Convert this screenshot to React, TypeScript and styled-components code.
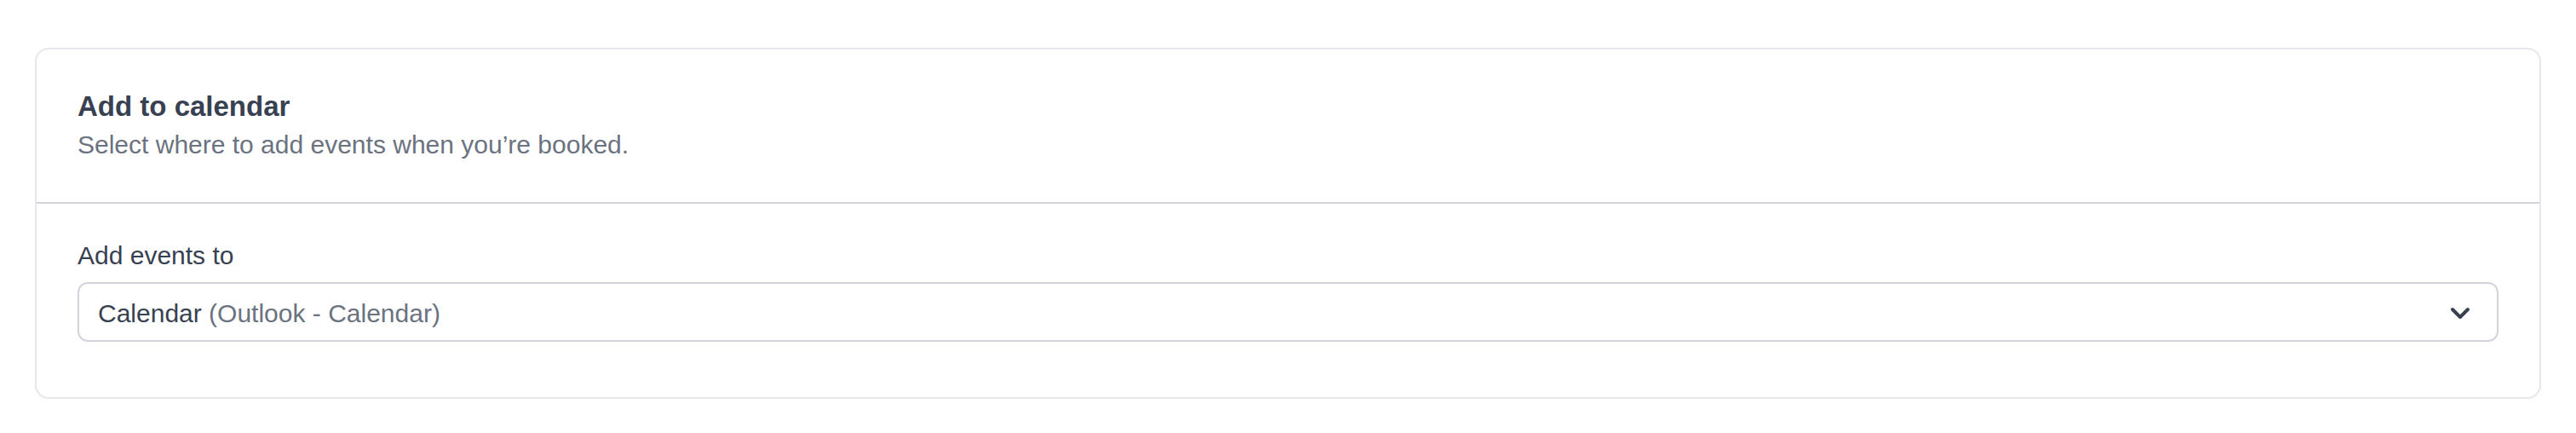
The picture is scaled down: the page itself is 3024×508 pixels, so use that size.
import React, { FC } from "react";
import styled, { createGlobalStyle } from "styled-components";

const GlobalStyle = createGlobalStyle`
  * {
    box-sizing: border-box;
  }
  html, body {
    margin: 0;
    background: #fff;
    font-family: "Liberation Sans", Arial, Helvetica, sans-serif;
  }
`;

const Page = styled.div`
  padding: 56px 41px 38px 41px;
`;

const Card = styled.section`
  border: 2px solid #e5e7eb;
  border-radius: 16px;
  background: #fff;
`;

const Header = styled.div`
  padding: 47px 48px 47px 48px;
  border-bottom: 2px solid #d1d5db;
`;

const Title = styled.h2`
  margin: 0;
  font-size: 33px;
  line-height: 40px;
  font-weight: 700;
  color: #374151;
`;

const Subtitle = styled.p`
  margin: 5px 0 0 0;
  font-size: 30px;
  line-height: 40px;
  color: #6b7280;
`;

const Body = styled.div`
  padding: 41px 48px 65px 48px;
  display: flex;
  flex-direction: column;
  gap: 11px;
`;

const Label = styled.label`
  font-size: 30px;
  line-height: 40px;
  color: #374151;
`;

const SelectBox = styled.button`
  display: flex;
  align-items: center;
  justify-content: space-between;
  width: 100%;
  height: 70px;
  padding: 3px 31px 0 22px;
  border: 2px solid #d1d5db;
  border-radius: 12px;
  background: #fff;
  font-family: inherit;
  font-size: 30px;
  line-height: 40px;
  text-align: left;
  cursor: pointer;
`;

const Value = styled.span<{ muted?: boolean }>`
  color: ${({ muted }) => (muted ? "#6b7280" : "#374151")};
`;

const Chevron: FC = () => (
  <svg width="24" height="16" viewBox="0 0 24 16" fill="none">
    <polyline
      points="3,3 12,12 21,3"
      stroke="#374151"
      strokeWidth="4"
      strokeLinecap="round"
      strokeLinejoin="round"
    />
  </svg>
);

const App: FC = () => {
  return (
    <>
      <GlobalStyle />
      <Page>
        <Card>
          <Header>
            <Title>Add to calendar</Title>
            <Subtitle>Select where to add events when you’re booked.</Subtitle>
          </Header>
          <Body>
            <Label>Add events to</Label>
            <SelectBox type="button">
              <span>
                <Value>Calendar</Value> <Value muted>(Outlook - Calendar)</Value>
              </span>
              <Chevron />
            </SelectBox>
          </Body>
        </Card>
      </Page>
    </>
  );
};

export default App;
